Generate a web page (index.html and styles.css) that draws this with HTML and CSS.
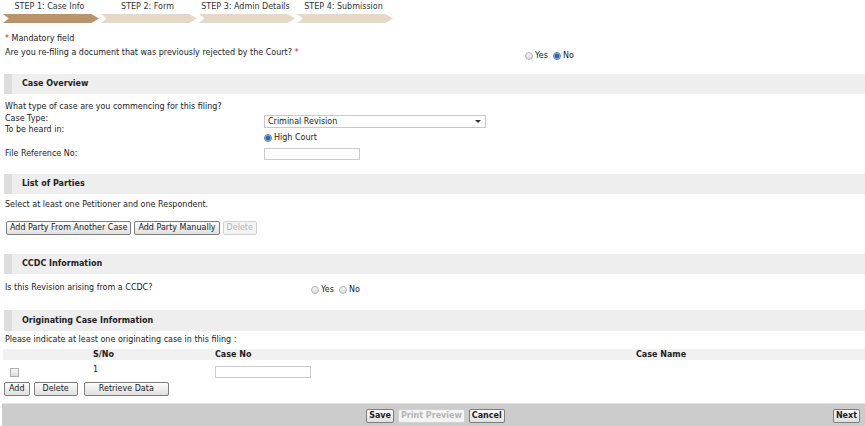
FILE: index.html
```html
<!DOCTYPE html>
<html lang="en">
  <head>
    <meta charset="UTF-8" />
    <title>Case Info</title>
    <link rel="stylesheet" href="styles.css">
  </head>
  <body>
    <div class="steps">
      <div class="step active"><span class="step-label">STEP 1: Case Info</span><div class="chevron"></div></div>
      <div class="step"><span class="step-label">STEP 2: Form</span><div class="chevron"></div></div>
      <div class="step"><span class="step-label">STEP 3: Admin Details</span><div class="chevron"></div></div>
      <div class="step"><span class="step-label">STEP 4: Submission</span><div class="chevron"></div></div>
    </div>

    <div class="intro">
      <p class="line"><span class="req">*</span> Mandatory field</p>
      <div class="refile-row">
        <p class="line">Are you re-filing a document that was previously rejected by the Court? <span class="req">*</span></p>
        <div class="radios">
          <label><input type="radio" name="refile" /> Yes</label>
          <label><input type="radio" name="refile" checked /> No</label>
        </div>
      </div>
    </div>

    <!-- Case Overview -->
    <div class="section-head">Case Overview</div>
    <div class="block">
      <p class="line">What type of case are you commencing for this filing?</p>
      <div class="overview">
        <div class="labels">
          <span>Case Type:</span>
          <span>To be heard in:</span>
          <span class="ref-label">File Reference No:</span>
        </div>
        <div class="controls">
          <div class="select"><span>Criminal Revision</span><span class="arrow"></span></div>
          <label class="court"><input type="radio" name="court" checked /> High Court</label>
          <input type="text" class="text-input" />
        </div>
      </div>
    </div>

    <!-- List of Parties -->
    <div class="section-head parties-head">List of Parties</div>
    <div class="block">
      <p class="line hint">Select at least one Petitioner and one Respondent.</p>
      <div class="btn-row parties-btns">
        <button type="button" class="btn">Add Party From Another Case</button>
        <button type="button" class="btn">Add Party Manually</button>
        <button type="button" class="btn" disabled>Delete</button>
      </div>
    </div>

    <!-- CCDC -->
    <div class="section-head ccdc-head">CCDC Information</div>
    <div class="ccdc-row">
      <p class="line">Is this Revision arising from a CCDC?</p>
      <div class="radios">
        <label><input type="radio" name="ccdc" /> Yes</label>
        <label><input type="radio" name="ccdc" /> No</label>
      </div>
    </div>

    <!-- Originating Case -->
    <div class="section-head orig-head">Originating Case Information</div>
    <p class="line orig-hint">Please indicate at least one originating case in this filing :</p>
    <div class="case-table">
      <div class="case-row head">
        <span></span>
        <span>S/No</span>
        <span>Case No</span>
        <span>Case Name</span>
      </div>
      <div class="case-row">
        <span><input type="checkbox" class="check" /></span>
        <span>1</span>
        <span><input type="text" class="text-input" /></span>
        <span></span>
      </div>
    </div>
    <div class="btn-row case-btns">
      <button type="button" class="btn add">Add</button>
      <button type="button" class="btn wide">Delete</button>
      <button type="button" class="btn wider">Retrieve Data</button>
    </div>

    <div class="footer">
      <span></span>
      <div class="footer-center">
        <button type="button" class="btn bold">Save</button>
        <button type="button" class="btn bold" disabled>Print Preview</button>
        <button type="button" class="btn bold">Cancel</button>
      </div>
      <button type="button" class="btn bold">Next</button>
    </div>
  </body>
</html>
```

FILE: styles.css
```css
body {
  margin: 0;
  font-family: "DejaVu Sans", Verdana, sans-serif;
  font-size: 8px;
  color: #222222;
  background-color: #ffffff;
  overflow: hidden;
}

p {
  margin: 0;
}

.line {
  line-height: 10px;
}

.req {
  color: #e02020;
}

/* wizard steps */
.steps {
  display: flex;
  gap: 2px;
  padding-left: 3px;
  height: 23px;
}

.step {
  width: 96px;
  display: flex;
  flex-direction: column;
  align-items: center;
}

.step-label {
  line-height: 14px;
  color: #333333;
  padding-right: 3px;
}

.chevron {
  width: 96px;
  height: 9px;
  background-color: #e5d8c6;
  clip-path: polygon(0 0, 92% 0, 100% 50%, 92% 100%, 0 100%, 6% 50%);
}

.step.active .chevron {
  background-color: #b9946b;
}

.intro {
  padding: 11px 5px 0 5px;
}

.refile-row {
  display: grid;
  grid-template-columns: 520px auto;
  margin-top: 4px;
}

.radios {
  display: flex;
  gap: 5px;
  margin-top: 3px;
}

label {
  display: flex;
  align-items: center;
  gap: 2px;
  line-height: 10px;
}

input[type="radio"] {
  appearance: none;
  margin: 0;
  width: 8px;
  height: 8px;
  border-radius: 50%;
  border: 1px solid #b4b4b4;
  background: linear-gradient(#f4f4f4, #dcdcdc);
}

input[type="radio"]:checked {
  border-color: #5c7fa8;
  background: radial-gradient(circle, #2a6ac0 0, #2a6ac0 2px, #bcd2ea 3px);
}

.check {
  appearance: none;
  margin: 0;
  width: 9px;
  height: 9px;
  border: 1px solid #b0b0b0;
  background: linear-gradient(#f6f6f6, #dedede);
}

/* section headers */
.section-head {
  margin: 13px 0 0 4px;
  height: 20px;
  line-height: 20px;
  background-color: #eeeeee;
  border-left: 8px solid #dddddd;
  padding-left: 10px;
  font-weight: bold;
}

.block {
  padding: 8px 5px 0 5px;
}

.overview {
  display: flex;
  margin-top: 1px;
}

.labels {
  width: 259px;
  display: flex;
  flex-direction: column;
  line-height: 11px;
}

.ref-label {
  margin-top: 13px;
}

.controls {
  display: flex;
  flex-direction: column;
  align-items: flex-start;
}

.select {
  margin-top: 2px;
  width: 213px;
  height: 11px;
  border: 1px solid #c8c8c8;
  padding: 0 4px 0 3px;
  display: flex;
  justify-content: space-between;
  align-items: center;
}

.arrow {
  width: 0;
  height: 0;
  border-left: 3px solid transparent;
  border-right: 3px solid transparent;
  border-top: 3px solid #333333;
}

.court {
  margin-top: 5px;
}

.text-input {
  margin: 5px 0 0 0;
  width: 96px;
  height: 12px;
  box-sizing: border-box;
  border: 1px solid #cccccc;
  padding: 0;
}

.parties-head {
  margin-top: 14px;
}

.hint {
  margin-top: -2px;
}

.btn-row {
  display: flex;
  gap: 3px;
}

.parties-btns {
  margin-top: 11px;
  padding-left: 1px;
}

.btn {
  font-family: "DejaVu Sans", Verdana, sans-serif;
  font-size: 8px;
  height: 14px;
  padding: 0 3px;
  border: 1px solid #7d7d7d;
  border-radius: 2px;
  background: linear-gradient(#fcfcfc, #e0e0e0);
  color: #222222;
  line-height: 12px;
}

.btn:disabled {
  color: #b4b4b4;
  border-color: #d0d0d0;
  background: #f4f4f4;
}

.btn.bold {
  font-weight: bold;
  padding: 0 2px;
}

.ccdc-head {
  margin-top: 19px;
}

.ccdc-row {
  display: grid;
  grid-template-columns: 306px auto;
  padding: 9px 5px 0 5px;
}

.ccdc-row .radios {
  margin-top: 2px;
}

.orig-head {
  margin-top: 15px;
  height: 21px;
  line-height: 21px;
}

.orig-hint {
  padding: 4px 5px 0 5px;
}

.case-table {
  margin: 4px 0 0 3px;
}

.case-row {
  display: grid;
  grid-template-columns: 90px 122px 421px 1fr;
  align-items: center;
}

.case-row.head {
  background-color: #f1f1f1;
  height: 11px;
  font-weight: bold;
}

.case-row .check {
  margin: 7px 0 0 7px;
}

.case-row .text-input {
  margin: 6px 0 1px 0;
}

.case-btns {
  margin: 3px 0 0 4px;
  gap: 4px;
}

.case-btns .add {
  padding: 0 4px;
}

.case-btns .wide {
  padding: 0 8px;
}

.case-btns .wider {
  margin-left: 2px;
  padding: 0 14px;
}

.footer {
  margin: 7px 0 0 2px;
  height: 23px;
  background-color: #cccccc;
  border-top: 1px solid #e4e4e4;
  display: flex;
  justify-content: space-between;
  align-items: center;
  padding-right: 5px;
}

.footer-center {
  display: flex;
  gap: 4px;
  margin-left: 36px;
}
```
